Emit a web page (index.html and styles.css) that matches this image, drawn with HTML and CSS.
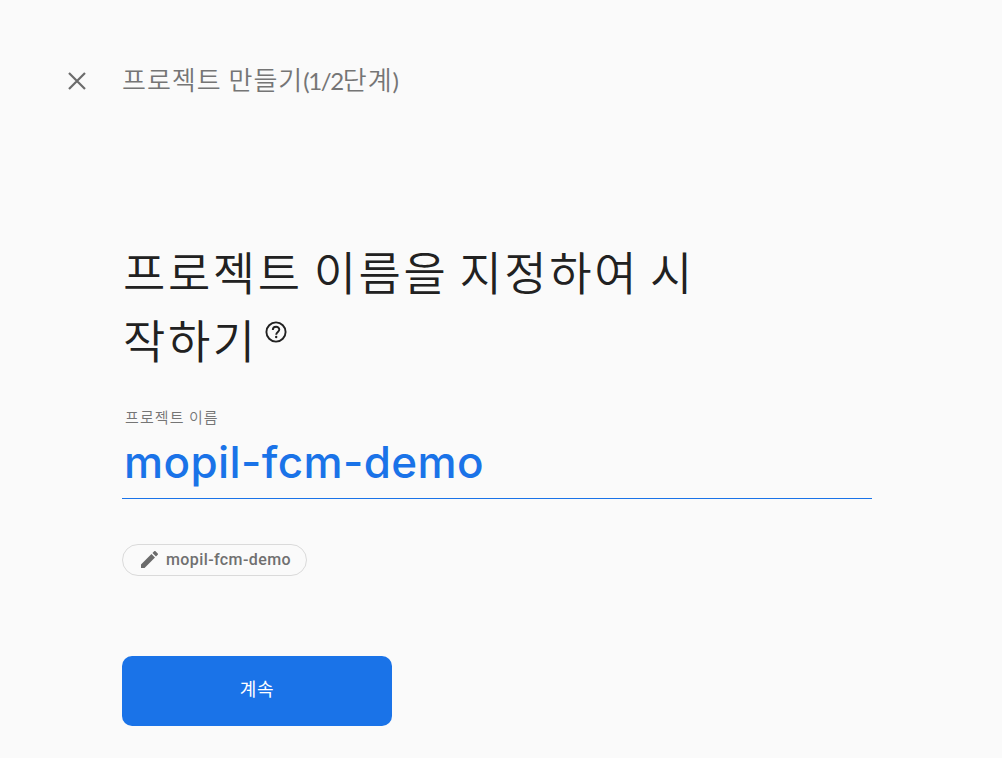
FILE: index.html
```
<!DOCTYPE html>
<html lang="ko">
<head>
    <meta charset="UTF-8">
    <meta name="viewport" content="width=device-width, initial-scale=1.0">
    <title>프로젝트 만들기</title>
    <link rel="stylesheet" href="styles.css">
</head>
<body>
    <header class="top-bar">
        <button class="close-button" type="button" aria-label="닫기">
            <svg width="18" height="18" viewBox="0 0 18 18"><path d="M1 1L17 17M17 1L1 17" fill="none" stroke="#6b6b6b" stroke-width="2.2"/></svg>
        </button>
        <span class="step-title">프로젝트 만들기<span class="step-count">(1/2</span>단계<span class="step-count">)</span></span>
    </header>

    <main class="create-project">
        <h1>
            <span class="line">프로젝트 이름을 지정하여 시</span>
            <span class="line last">작하기<svg class="help-icon" width="22" height="22" viewBox="0 0 22 22"><circle cx="11" cy="11" r="9.600" fill="none" stroke="#212121" stroke-width="1.900"/><path d="M7.800 9C7.800 4.600 14.300 4.700 14.300 8.600C14.300 10.800 11.200 11.200 11.200 13.700" fill="none" stroke="#212121" stroke-width="1.900"/><circle cx="11.200" cy="16" r="1.200" fill="#212121"/></svg></span>
        </h1>

        <label class="field-label" for="projectName">프로젝트 이름</label>
        <input class="project-name" type="text" id="projectName" value="mopil-fcm-demo" spellcheck="false">

        <div class="id-chip">
            <svg width="17" height="17" viewBox="3 3 18 18"><path fill="#6b6b6b" d="M3 17.250V21h3.750L17.810 9.940l-3.750-3.750L3 17.250zM20.710 7.040c.39-.39.39-1.020 0-1.410l-2.340-2.340c-.39-.39-1.020-.39-1.410 0l-1.830 1.830 3.750 3.750 1.830-1.830z"/></svg>
            <span class="chip-text">mopil-fcm-demo</span>
        </div>

        <button class="continue-button" type="button">계속</button>
    </main>
</body>
</html>
```
FILE: styles.css
```
* {
    box-sizing: border-box;
}

body {
    margin: 0;
    padding: 61px 130px 0 68px;
    height: 758px;
    overflow: hidden;
    background-color: #fafafa;
    color: #212121;
    font-family: "Noto Sans CJK KR", sans-serif;
    font-weight: 350;
}

button {
    border: none;
    cursor: pointer;
    font-family: inherit;
}

.top-bar {
    display: flex;
    align-items: center;
    gap: 36px;
    height: 40px;
    color: #757575;
}

.close-button {
    display: flex;
    padding: 0;
    background: none;
}

.step-title {
    font-size: 26px;
    letter-spacing: 1px;
    word-spacing: -1.5px;
    line-height: 38px;
    padding-bottom: 2px;
    white-space: nowrap;
}

.step-count {
    font-family: Lato, sans-serif;
    font-size: 24px;
    font-weight: 400;
    letter-spacing: -1.4px;
}

.create-project {
    display: flex;
    flex-direction: column;
    align-items: flex-start;
    padding: 135px 0 0 54px;
}

h1 {
    margin: 0;
    padding-left: 1px;
    font-size: 46px;
    font-weight: 350;
    letter-spacing: 2.6px;
    word-spacing: -4.5px;
    line-height: 68px;
    white-space: nowrap;
}

.line {
    display: block;
}

.help-icon {
    margin-left: 7px;
    vertical-align: 15px;
}

.field-label {
    margin-top: 34px;
    padding-left: 3px;
    color: #757575;
    font-size: 15px;
    font-weight: 350;
    letter-spacing: 1.1px;
    word-spacing: -1px;
    line-height: 22px;
}

.project-name {
    width: 750px;
    height: 71px;
    padding: 0 2px 2px;
    border: none;
    border-bottom: 1px solid #1a73e8;
    outline: none;
    background: none;
    color: #1a73e8;
    font-family: Inter, sans-serif;
    font-size: 44px;
    font-weight: 500;
    letter-spacing: 0.4px;
}

.id-chip {
    display: flex;
    align-items: center;
    gap: 8px;
    width: 185px;
    height: 32px;
    margin-top: 45px;
    padding: 0 0 1px 18px;
    border: 1px solid #dadada;
    border-radius: 16px;
    color: #707070;
}

.chip-text {
    font-family: Roboto, sans-serif;
    font-size: 16px;
    font-weight: 500;
    letter-spacing: 0.4px;
}

.continue-button {
    width: 270px;
    height: 70px;
    margin-top: 80px;
    padding-bottom: 7px;
    border-radius: 10px;
    background-color: #1a73e8;
    color: white;
    font-size: 18px;
    letter-spacing: 0.8px;
}
```
